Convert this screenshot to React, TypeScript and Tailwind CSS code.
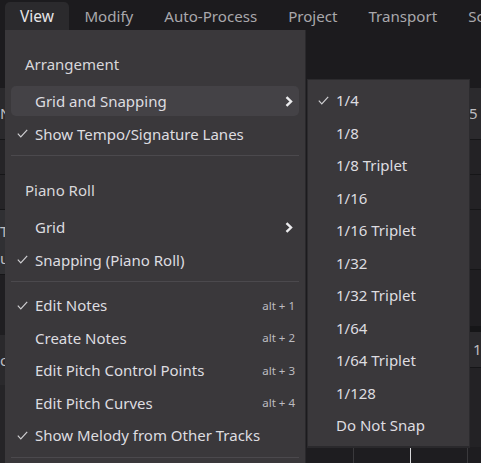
import React from "react";

const font = { fontFamily: '"Noto Sans", "Open Sans", sans-serif' };

function Check() {
  return (
    <svg width="11" height="9" viewBox="0 0 11 9" className="block">
      <polyline points="0.8,4.6 3.8,7.8 10.2,0.8" fill="none" stroke="#cfcfd2" strokeWidth="1.2" />
    </svg>
  );
}

function Chevron() {
  return (
    <svg width="8" height="11" viewBox="0 0 8 11" className="block">
      <polyline points="1.5,1.2 6,5.5 1.5,9.8" fill="none" stroke="#ececee" strokeWidth="2.4" />
    </svg>
  );
}

type Item = {
  label: string;
  checked?: boolean;
  sub?: boolean;
  hot?: boolean;
  keys?: string;
};

function Row({ item }: { item: Item }) {
  return (
    <div className="h-[32.5px] py-[1.25px]">
      <div
        className={`h-full rounded-[5px] flex items-center pr-[6px] ${item.hot ? "bg-[#444246]" : ""}`}
      >
        <div className="w-[24px] pl-[6px] flex items-center">{item.checked ? <Check /> : null}</div>
        <span className="flex-1 text-[15px] text-[#dedde0] whitespace-nowrap">{item.label}</span>
        {item.keys ? <span className="text-[11.5px] text-[#bdbcc0] mr-[-2px]">{item.keys}</span> : null}
        {item.sub ? <Chevron /> : null}
      </div>
    </div>
  );
}

function Header({ label }: { label: string }) {
  return (
    <div className="mt-[6.5px] h-[41.5px] flex items-center pl-[14px] text-[15px] text-[#d8d7da]">{label}</div>
  );
}

function Separator() {
  return (
    <div className="pt-[5px] pb-[7px]">
      <div className="h-px bg-[#4b494d]" />
    </div>
  );
}

const snaps: Item[] = [
  { label: "1/4", checked: true },
  { label: "1/8" },
  { label: "1/8 Triplet" },
  { label: "1/16" },
  { label: "1/16 Triplet" },
  { label: "1/32" },
  { label: "1/32 Triplet" },
  { label: "1/64" },
  { label: "1/64 Triplet" },
  { label: "1/128" },
  { label: "Do Not Snap" },
];

export default function App() {
  const menus = ["View", "Modify", "Auto-Process", "Project", "Transport", "Script"];
  return (
    <div className="relative w-[481px] h-[463px] overflow-hidden bg-[#1c1b1e]" style={font}>
      {/* menu bar */}
      <div className="h-[31px] flex items-end pl-[5px]">
        {menus.map((m, i) => (
          <div
            key={m}
            className={`h-[29px] flex items-center whitespace-nowrap ${
              i === 0
                ? "px-[15px] text-[15.5px] bg-[#2b2a2d] rounded-t-[5px] text-[#e6e5e8]"
                : "px-[15.5px] text-[15.1px] text-[#a9a8ac]"
            }`}
          >
            {m}
          </div>
        ))}
      </div>

      {/* workspace behind the menus */}
      <div className="h-[57px] bg-[#1c1b1e]" />
      <div className="flex h-[375px]">
        <div className="w-[8px] flex flex-col text-[15px] text-[#bdbcc0]">
          <div className="h-[52px] bg-[#2a292c] border-b border-[#161618] flex items-center">N</div>
          <div className="h-[35px] bg-[#252427] border-b border-[#161618]" />
          <div className="h-[35px] bg-[#252427] border-b border-[#161618]" />
          <div className="h-[65px] bg-[#303033] border-b border-[#161618] leading-[27px] pt-[8px]">
            Tr
            <br />
            u
          </div>
          <div className="h-[60px] bg-[#1f1e21]" />
          <div className="h-[50px] bg-[#2a292c] flex items-center">o</div>
          <div className="flex-1 bg-[#252427]" />
        </div>
        <div className="flex-1" />
        <div className="w-[12px] flex flex-col text-[15px] text-[#bdbcc0]">
          <div className="h-[52px] bg-[#2b2a2d] border-b border-[#161618] flex items-center">5</div>
          <div className="h-[35px] bg-[#232225] border-b border-[#161618]" />
          <div className="h-[35px] bg-[#232225] border-b border-[#161618]" />
          <div className="h-[60px] bg-[#232225] border-b border-[#161618]" />
          <div className="h-[62px] bg-[#1f1e21] border-b-[6px] border-[#161618]" />
          <div className="h-[36px] bg-[#2b2a2d] border-b border-[#161618] flex items-center pl-[4px]">1</div>
          <div className="flex-1 bg-[#232225]" />
        </div>
      </div>

      {/* timeline strip at the bottom */}
      <div className="absolute left-[305px] right-0 top-[447px] bottom-0 bg-[#1e1d20] flex">
        <div className="w-[49px] border-r border-[#3a393c]" />
        <div className="w-[57px] border-r border-[#d8d8da]" />
        <div className="w-[57px] border-r border-[#3a393c]" />
      </div>

      {/* View dropdown */}
      <div className="absolute left-[5px] top-[30px] w-[301px] h-[440px] bg-[#3a383b] border-r border-[#2a292c] px-[6px] pt-[7px]">
        <Header label="Arrangement" />
        <Row item={{ label: "Grid and Snapping", sub: true, hot: true }} />
        <Row item={{ label: "Show Tempo/Signature Lanes", checked: true }} />
        <Separator />
        <Header label="Piano Roll" />
        <Row item={{ label: "Grid", sub: true }} />
        <Row item={{ label: "Snapping (Piano Roll)", checked: true }} />
        <Separator />
        <Row item={{ label: "Edit Notes", checked: true, keys: "alt + 1" }} />
        <Row item={{ label: "Create Notes", keys: "alt + 2" }} />
        <Row item={{ label: "Edit Pitch Control Points", keys: "alt + 3" }} />
        <Row item={{ label: "Edit Pitch Curves", keys: "alt + 4" }} />
        <Row item={{ label: "Show Melody from Other Tracks", checked: true }} />
        <Separator />
      </div>

      {/* Grid and Snapping submenu */}
      <div className="absolute left-[307px] top-[79px] w-[163px] bg-[#3a383b] border border-[#2c2b2e] border-b-[2px] border-b-[#2a292c] px-[4px] pt-[4px] pb-[4px]">
        {snaps.map((s) => (
          <Row key={s.label} item={s} />
        ))}
      </div>
    </div>
  );
}
